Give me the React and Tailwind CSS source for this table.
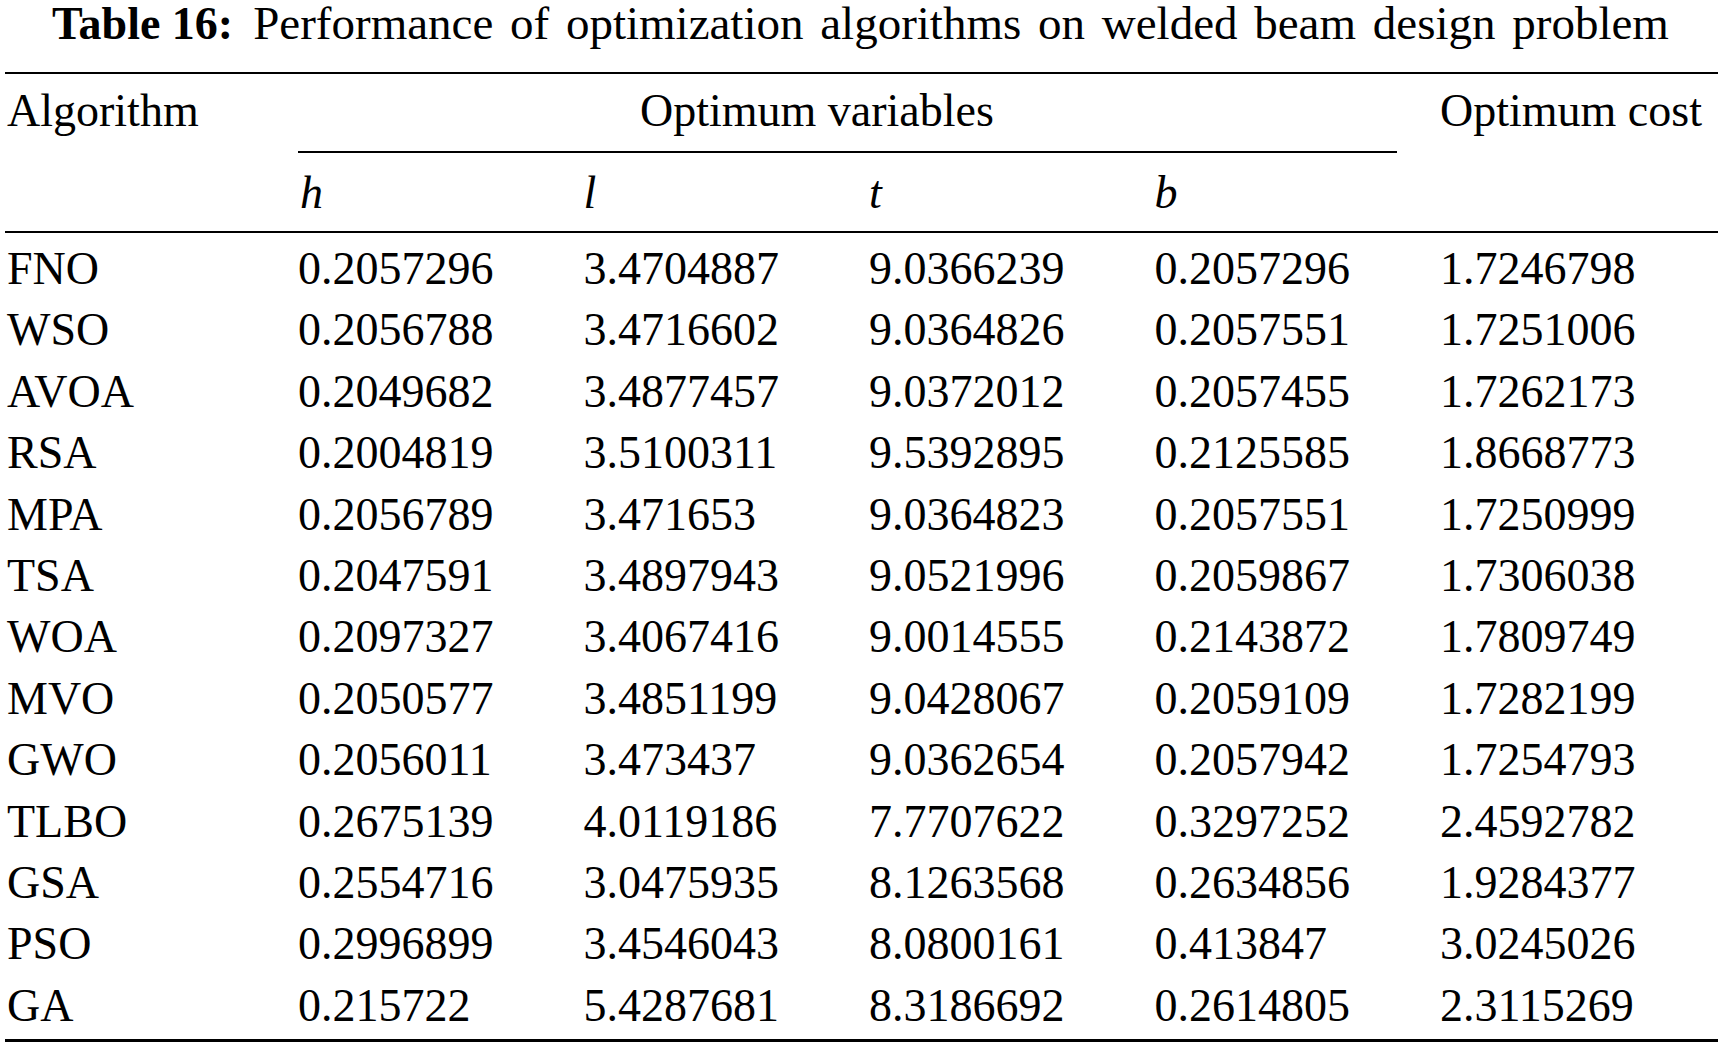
const rows = [
  ['FNO', '0.2057296', '3.4704887', '9.0366239', '0.2057296', '1.7246798'],
  ['WSO', '0.2056788', '3.4716602', '9.0364826', '0.2057551', '1.7251006'],
  ['AVOA', '0.2049682', '3.4877457', '9.0372012', '0.2057455', '1.7262173'],
  ['RSA', '0.2004819', '3.5100311', '9.5392895', '0.2125585', '1.8668773'],
  ['MPA', '0.2056789', '3.471653', '9.0364823', '0.2057551', '1.7250999'],
  ['TSA', '0.2047591', '3.4897943', '9.0521996', '0.2059867', '1.7306038'],
  ['WOA', '0.2097327', '3.4067416', '9.0014555', '0.2143872', '1.7809749'],
  ['MVO', '0.2050577', '3.4851199', '9.0428067', '0.2059109', '1.7282199'],
  ['GWO', '0.2056011', '3.473437', '9.0362654', '0.2057942', '1.7254793'],
  ['TLBO', '0.2675139', '4.0119186', '7.7707622', '0.3297252', '2.4592782'],
  ['GSA', '0.2554716', '3.0475935', '8.1263568', '0.2634856', '1.9284377'],
  ['PSO', '0.2996899', '3.4546043', '8.0800161', '0.413847', '3.0245026'],
  ['GA', '0.215722', '5.4287681', '8.3186692', '0.2614805', '2.3115269'],
];

const cols = 'grid grid-cols-[293px_285.5px_285.5px_285.5px_285.5px_1fr]';

export default function App() {
  return (
    <div className="min-h-screen w-[1721px] bg-white text-black font-['Liberation_Serif','Times_New_Roman',serif] text-[46px]">
      {/* Caption */}
      <div className="h-[72px] text-center leading-[46px] whitespace-nowrap">
        <span className="font-bold">Table 16:</span>
        <span className="ml-[20px] text-[47px] [word-spacing:5px]">Performance of optimization algorithms on welded beam design problem</span>
      </div>

      <div className="ml-[5px] w-[1713px] border-t-2 border-b-[3px] border-black">
        {/* Header */}
        <div className="flex border-b-2 border-black">
          <div className="w-[293px] pl-[2px] pt-[14px] leading-[46px]">Algorithm</div>
          <div className="w-[1142px] flex flex-col">
            <div className="mr-[43px] h-[79px] border-b-2 border-black pt-[14px] pl-[342px] leading-[46px]">
              Optimum variables
            </div>
            <div className="grid grid-cols-4 h-[78px] pt-[17px] leading-[46px] italic">
              <div className="pl-[2px]">h</div>
              <div>l</div>
              <div>t</div>
              <div>b</div>
            </div>
          </div>
          <div className="flex-1 pt-[14px] leading-[46px]">Optimum cost</div>
        </div>

        {/* Body */}
        <div className="pt-[5px] pb-[3px]">
          {rows.map((r) => (
            <div key={r[0]} className={`${cols} leading-[61.4px]`}>
              <div className="pl-[2px]">{r[0]}</div>
              {r.slice(1).map((v, i) => (
                <div key={i}>{v}</div>
              ))}
            </div>
          ))}
        </div>
      </div>
    </div>
  );
}
